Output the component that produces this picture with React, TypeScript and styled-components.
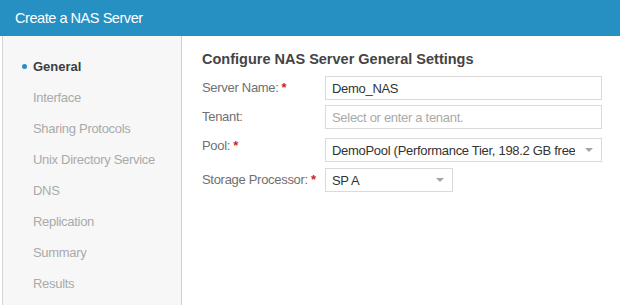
import React from "react";
import styled, { createGlobalStyle } from "styled-components";

const Global = createGlobalStyle`
  html, body { margin: 0; padding: 0; background: #fff; }
  body { font-family: "Liberation Sans", Arial, sans-serif; }
  * { box-sizing: border-box; }
`;

const Dialog = styled.div`
  width: 620px;
  height: 305px;
  display: flex;
  flex-direction: column;
  overflow: hidden;
  background: #fff;
`;

const Header = styled.div`
  height: 36px;
  flex: none;
  background: #2690c3;
  color: #fff;
  font-size: 14.5px;
  letter-spacing: -0.45px;
  display: flex;
  align-items: center;
  padding-left: 15px;
  padding-bottom: 1px;
`;

const Body = styled.div`
  flex: 1;
  display: flex;
  min-height: 0;
`;

const Sidebar = styled.ul`
  list-style: none;
  margin: 0 0 0 2px;
  padding: 16px 0 0 0;
  width: 180px;
  flex: none;
  background: #f7f7f7;
  border-left: 1px solid #d4d4d4;
  border-right: 1px solid #cfcfcf;
`;

const NavItem = styled.li<{ $active?: boolean }>`
  position: relative;
  height: ${(p) => (p.$active ? 30 : 31)}px;
  line-height: ${(p) => (p.$active ? 30 : 31)}px;
  padding-left: 30px;
  font-size: 13px;
  letter-spacing: ${(p) => (p.$active ? "0" : "-0.3px")};
  font-weight: ${(p) => (p.$active ? 700 : 400)};
  color: ${(p) => (p.$active ? "#3d3d3d" : "#aaaaaa")};
  white-space: nowrap;
`;

const Bullet = styled.span`
  position: absolute;
  left: 19px;
  top: 12px;
  width: 5px;
  height: 5px;
  border-radius: 50%;
  background: #2a8cc4;
`;

const Main = styled.div`
  flex: 1;
  padding: 15px 18px 0 20px;
`;

const Title = styled.h2`
  margin: 0 0 8px 0;
  font-size: 14.5px;
  font-weight: 700;
  color: #444;
  line-height: 17px;
`;

const Form = styled.div`
  display: grid;
  grid-template-columns: 123px 277px;
`;

const Label = styled.div<{ $top?: number; $mt?: number }>`
  font-size: 13px;
  letter-spacing: -0.3px;
  color: #707070;
  height: 24px;
  line-height: 24px;
  margin-top: ${(p) => p.$mt ?? 0}px;
  transform: translateY(${(p) => -(p.$top ?? 0)}px);
  white-space: nowrap;
`;

const Required = styled.span`
  color: #d01f1f;
  font-weight: 700;
  margin-left: 3px;
`;

const Field = styled.div<{ $width?: number; $mt?: number }>`
  height: 24px;
  width: ${(p) => (p.$width ? `${p.$width}px` : "100%")};
  margin-top: ${(p) => p.$mt ?? 0}px;
  border: 1px solid #dadada;
  background: #fff;
  display: flex;
  align-items: center;
  padding: 0 6px 0 6px;
  font-size: 13px;
  letter-spacing: -0.3px;
  color: #333;
  white-space: nowrap;
  overflow: hidden;
`;

const Placeholder = styled.span`
  color: #aaaaaa;
`;

const Value = styled.span`
  flex: 1;
  overflow: hidden;
`;

const Caret = styled.span`
  flex: none;
  width: 0;
  height: 0;
  border-left: 4px solid transparent;
  border-right: 4px solid transparent;
  border-top: 4px solid #a5a5a5;
  margin-left: 10px;
  margin-right: 2px;
`;

const nav = [
  "General",
  "Interface",
  "Sharing Protocols",
  "Unix Directory Service",
  "DNS",
  "Replication",
  "Summary",
  "Results",
];

export default function App() {
  return (
    <Dialog>
      <Global />
      <Header>Create a NAS Server</Header>
      <Body>
        <Sidebar>
          {nav.map((n, i) => (
            <NavItem key={n} $active={i === 0}>
              {i === 0 && <Bullet />}
              {n}
            </NavItem>
          ))}
        </Sidebar>
        <Main>
          <Title>Configure NAS Server General Settings</Title>
          <Form>
            <Label>
              Server Name:<Required>*</Required>
            </Label>
            <Field>Demo_NAS</Field>

            <Label $mt={5}>Tenant:</Label>
            <Field $mt={5}>
              <Placeholder>Select or enter a tenant.</Placeholder>
            </Field>

            <Label $mt={9} $top={4}>
              Pool:<Required>*</Required>
            </Label>
            <Field $mt={9}>
              <Value>DemoPool (Performance Tier, 198.2 GB free</Value>
              <Caret />
            </Field>

            <Label $mt={6}>
              Storage Processor:<Required>*</Required>
            </Label>
            <Field $mt={6} $width={128}>
              <Value>SP A</Value>
              <Caret />
            </Field>
          </Form>
        </Main>
      </Body>
    </Dialog>
  );
}
